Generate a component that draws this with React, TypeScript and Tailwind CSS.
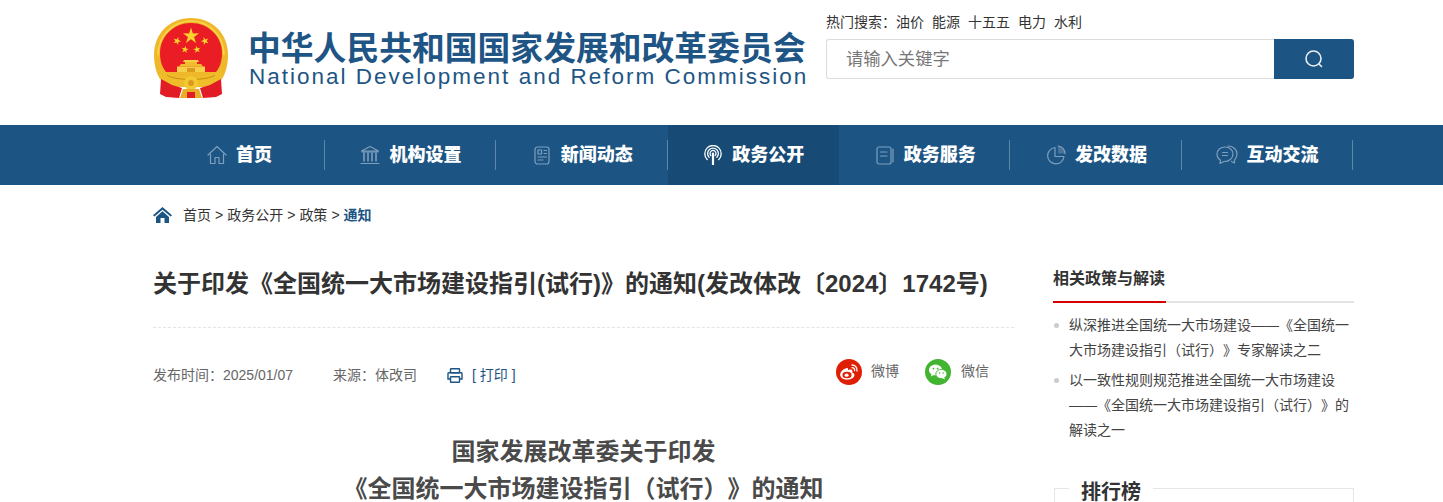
import React from "react";

const font = { fontFamily: '"Liberation Sans", "Noto Sans CJK SC", sans-serif' };

function Star({ x, y, r, rot = 0 }: { x: number; y: number; r: number; rot?: number }) {
  const pts: string[] = [];
  for (let i = 0; i < 10; i++) {
    const a = ((-90 + rot + i * 36) * Math.PI) / 180;
    const rr = i % 2 === 0 ? r : r * 0.38;
    pts.push(`${(x + rr * Math.cos(a)).toFixed(2)},${(y + rr * Math.sin(a)).toFixed(2)}`);
  }
  return <polygon points={pts.join(" ")} fill="#fbd32c" />;
}

function Emblem() {
  return (
    <svg width="76" height="82" viewBox="0 0 76 82" className="shrink-0">
      <path d="M7 62 C2 54 1 44 1 38 C1 16 17 1 38 1 C59 1 75 16 75 38 C75 44 74 54 69 62 L60 68 H16 Z" fill="#eeb82a" />
      <path d="M5 38 C5 19 20 4 38 4 C56 4 71 19 71 38" fill="none" stroke="#f8d54a" strokeWidth="1.5" />
      <path d="M38 6 C21 6 7 19 7 36 C7 44 9 50 13 55 H63 C67 50 69 44 69 36 C69 19 55 6 38 6 Z" fill="#ea1c24" />
      <Star x={38} y={19} r={8.5} />
      <Star x={24} y={24} r={4.2} rot={20} />
      <Star x={52} y={24} r={4.2} rot={-20} />
      <Star x={32} y={32.5} r={3.9} rot={10} />
      <Star x={44} y={32.5} r={3.9} rot={-10} />
      <path d="M31 43 H45 L46 45 H30 Z" fill="#f7cf45" />
      <path d="M32 45 H44 V47 H48 L50 49.5 H26 L28 47 H32 Z" fill="#f0bd2f" />
      <path d="M24 49.5 H52 V55 H24 Z" fill="#f7d04a" />
      <path d="M34 51 H42 V55 H34 Z" fill="#d99a1e" />
      <path d="M9 52 C15 59 26 60 38 60 C50 60 61 59 67 52 L70 60 L58 70 H18 L6 60 Z" fill="#f0bd2a" />
      <path d="M14 58 C22 64 54 64 62 58" fill="none" stroke="#c98a12" strokeWidth="1" />
      <path d="M8 62 L19 68 L29 71 L26 81 L13 80 L7 77 Z" fill="#e21c24" />
      <path d="M68 62 L57 68 L47 71 L50 81 L63 80 L69 77 Z" fill="#e21c24" />
      <circle cx="38" cy="66" r="7" fill="#f3c832" />
      <circle cx="38" cy="66" r="3" fill="#d99a1e" />
      <path d="M30 72 H46 L49 81 H27 Z" fill="#e9ad28" />
      <path d="M34 75 H42 V81 H34 Z" fill="#e21c24" />
    </svg>
  );
}

const stroke = {
  fill: "none",
  stroke: "#7f9fbd",
  strokeWidth: 1.2,
  strokeLinecap: "round" as const,
  strokeLinejoin: "round" as const,
};

const icons: Record<string, React.ReactNode> = {
  home: (
    <svg width="20" height="20" viewBox="0 0 20 20" {...stroke}>
      <path d="M1 10 L10 1.5 L19 10" />
      <path d="M3.5 9 V18.5 H8 V12.5 H12 V18.5 H16.5 V9" />
    </svg>
  ),
  bank: (
    <svg width="20" height="20" viewBox="0 0 20 20" {...stroke}>
      <path d="M1.5 6 L10 1.5 L18.5 6 Z" />
      <path d="M4 8 V16 M8 8 V16 M12 8 V16 M16 8 V16" strokeWidth="1.6" />
      <path d="M1 18.5 H19 M2 6.8 H18" />
    </svg>
  ),
  news: (
    <svg width="16" height="19" viewBox="0 0 16 19" {...stroke}>
      <rect x="1" y="1" width="14" height="17" rx="2.5" />
      <rect x="4" y="4" width="3.5" height="4" />
      <path d="M10 4.5 H12.5 M10 7.5 H12.5 M4 11 H12.5 M4 14 H9" />
    </svg>
  ),
  signal: (
    <svg width="18" height="20" viewBox="0 0 18 20" fill="none" stroke="#ffffff" strokeWidth="1.3" strokeLinecap="round">
      <path d="M3.2 14.5 A8.2 8.2 0 1 1 14.8 14.5" />
      <path d="M5.2 12.4 A5.4 5.4 0 1 1 12.8 12.4" />
      <path d="M6.9 10.6 A3 3 0 1 1 11.1 10.6" />
      <path d="M9 8.5 V19.5" strokeWidth="2.2" />
    </svg>
  ),
  book: (
    <svg width="18" height="19" viewBox="0 0 18 19" {...stroke}>
      <rect x="1" y="1" width="14" height="17" rx="2" />
      <path d="M4.5 6 H11 M4.5 10 H11 M17 3 V16" />
    </svg>
  ),
  pie: (
    <svg width="19" height="20" viewBox="0 0 19 20" {...stroke}>
      <path d="M8 2.5 A8.2 8.2 0 1 0 17 11.5 H8 Z" />
      <path d="M11 1 A7.5 7.5 0 0 1 18 8.5 H11 Z" fill="#6d8dac" stroke="none" opacity="0.55" />
      <path d="M11 1 A7.5 7.5 0 0 1 18 8.5" />
    </svg>
  ),
  chat: (
    <svg width="22" height="20" viewBox="0 0 22 20" {...stroke}>
      <path d="M9 2 C4.5 2 1 5 1 9 C1 11.8 2.5 14 4.5 15.2 L4 18.5 L8 16.5 C13 16.5 17 13.5 17 9 C17 5 13.5 2 9 2 Z" />
      <path d="M12 1 C17 1 21 4.5 21 9 C21 11.5 20 13.5 18.5 15 L18.5 18 L15.5 16.5" />
      <path d="M6.5 7.5 H11.5 M6.5 10.5 H11.5" />
    </svg>
  ),
};

const navItems = [
  { key: "home", label: "首页", sep: true },
  { key: "bank", label: "机构设置", sep: true },
  { key: "news", label: "新闻动态", sep: true },
  { key: "signal", label: "政务公开", active: true, sep: false },
  { key: "book", label: "政务服务", sep: true },
  { key: "pie", label: "发改数据", sep: true },
  { key: "chat", label: "互动交流", sep: true },
];

function Header() {
  return (
    <div className="h-[125px] flex pl-[153px]">
      <div className="w-[1201px] flex justify-between">
        <div className="flex items-start pt-[17px] gap-[19px]">
          <Emblem />
          <div className="text-[#1e5584] pt-[16px] w-[562px]">
            <div className="text-[32.8px] leading-[31px] font-bold whitespace-nowrap">中华人民共和国国家发展和改革委员会</div>
            <div className="text-[22.5px] leading-[25px] tracking-[2px] pl-[1px] whitespace-nowrap">National Development and Reform Commission</div>
          </div>
        </div>
        <div className="w-[528px] pt-[13px]">
          <div className="text-[14px] leading-[19px] text-[#333] flex gap-[8px] whitespace-nowrap">
            <span className="-mr-[8px] w-[70px]">热门搜索：</span>
            <span>油价</span>
            <span>能源</span>
            <span>十五五</span>
            <span>电力</span>
            <span>水利</span>
          </div>
          <div className="mt-[7px] h-[40px] flex">
            <div className="w-[448px] border border-[#dcdcdc] border-r-0 rounded-l-[3px] pl-[19px] pt-[2px] flex items-center text-[17.3px] text-[#777]">
              请输入关键字
            </div>
            <div className="w-[80px] bg-[#1c5483] rounded-r-[3px] flex items-center justify-center">
              <svg width="20" height="20" viewBox="0 0 20 20" fill="none" stroke="#e8eef4" strokeWidth="1.6" strokeLinecap="round">
                <circle cx="9.5" cy="9.5" r="7.5" />
                <path d="M15 15 L17.5 17.5" />
              </svg>
            </div>
          </div>
        </div>
      </div>
    </div>
  );
}

function Nav() {
  return (
    <div className="h-[60px] bg-[#1c5483] flex pl-[153.4px]">
      {navItems.map((n) => (
        <div
          key={n.key}
          className={`w-[171.4px] h-full flex items-center justify-center relative gap-[8px] ${n.active ? "bg-[#174a75]" : ""}`}
        >
          <span className="w-[22px] h-[20px] flex items-center justify-center">{icons[n.key]}</span>
          <span className="text-[18px] font-black text-white whitespace-nowrap">{n.label}</span>
          {n.sep ? <span className="absolute right-0 top-[15px] h-[30px] w-px bg-[#5d86a9]" /> : null}
        </div>
      ))}
    </div>
  );
}

function Crumb() {
  return (
    <div className="h-[60px] flex items-center text-[14px] text-[#333]">
      <svg width="19" height="16" viewBox="0 0 19 16" className="mr-[11px] -mt-[1px]">
        <path d="M9.5 0 L19 8.2 L17.6 9.6 L9.5 2.8 L1.4 9.6 L0 8.2 Z" fill="#1c5483" />
        <path d="M3 10 L9.5 4.3 L16 10 V16 H11.5 V11 H7.5 V16 H3 Z" fill="#1c5483" />
      </svg>
      <span>首页</span>
      <span className="mx-[4px]">&gt;</span>
      <span>政务公开</span>
      <span className="mx-[4px]">&gt;</span>
      <span>政策</span>
      <span className="mx-[4px]">&gt;</span>
      <span className="text-[#1c5483] font-bold">通知</span>
    </div>
  );
}

function Main() {
  return (
    <div className="w-[861px]">
      <h1 className="mt-[21px] text-[24px] leading-[36px] font-bold text-[#333] whitespace-nowrap">
        关于印发《全国统一大市场建设指引(试行)》的通知(发改体改〔2024〕1742号)
      </h1>
      <div className="mt-[25px] border-b border-dashed border-[#e4e4e4]" />
      <div className="mt-[25px] h-[40px] flex items-center text-[14px] text-[#666] whitespace-nowrap">
        <span className="mt-[4px] w-[180px]">发布时间：2025/01/07</span>
        <span className="mt-[4px] w-[114px]">来源：体改司</span>
        <span className="mt-[4px] flex items-center gap-[9px] text-[#1c5483]">
          <svg width="16" height="15" viewBox="0 0 16 15" fill="none" stroke="#1c5483" strokeWidth="1.4">
            <rect x="3.5" y="0.8" width="9" height="4" rx="0.5" />
            <path d="M3.5 11 H1 V5.5 C1 5 1.5 4.8 2 4.8 H14 C14.5 4.8 15 5 15 5.5 V11 H12.5" />
            <rect x="3.5" y="8.8" width="9" height="5.4" rx="0.5" />
          </svg>
          [ 打印 ]
        </span>
        <div className="ml-auto flex items-center mr-[25px] -mt-[3px]">
          <span className="w-[26px] h-[26px] rounded-full bg-[#de1f05] flex items-center justify-center mr-[9px]">
            <svg width="20" height="18" viewBox="0 0 20 18">
              <path d="M8 5 C4 6 1 9 1.2 12 C1.5 15.5 5.5 17 9 16.6 C13 16.2 15.8 14 15.4 11.4 C15.2 10.2 14 9.6 13.2 9.4 C13.8 8 13.4 6.8 12 6.6 C11 6.4 9.6 7 9 7.2 C9.4 5.6 9 4.6 8 5 Z" fill="#fff" />
              <ellipse cx="8" cy="12" rx="4.6" ry="3.2" fill="#de1f05" />
              <ellipse cx="7.6" cy="12.2" rx="2" ry="1.6" fill="#fff" />
              <path d="M13 2 C16 2 18.5 4.5 18 8 M13 4.6 C14.8 4.6 16 6 15.6 7.6" fill="none" stroke="#fff" strokeWidth="1.3" strokeLinecap="round" />
            </svg>
          </span>
          <span className="w-[54px]">微博</span>
          <span className="w-[26px] h-[26px] rounded-full bg-[#41b52f] flex items-center justify-center mr-[10px]">
            <svg width="20" height="16" viewBox="0 0 20 16">
              <ellipse cx="7.5" cy="6" rx="6.6" ry="5.4" fill="#fff" />
              <path d="M3.6 9.5 L3 12.5 L6.5 10.5 Z" fill="#fff" />
              <ellipse cx="13.4" cy="10" rx="5.6" ry="4.6" fill="#fff" stroke="#41b52f" strokeWidth="0.9" />
              <path d="M16 13 L17 15.4 L13.8 14 Z" fill="#fff" />
              <circle cx="5.4" cy="4.6" r="0.9" fill="#41b52f" />
              <circle cx="9.6" cy="4.6" r="0.9" fill="#41b52f" />
              <circle cx="11.6" cy="9" r="0.75" fill="#41b52f" />
              <circle cx="15.2" cy="9" r="0.75" fill="#41b52f" />
            </svg>
          </span>
          <span>微信</span>
        </div>
      </div>
      <div className="mt-[40px] text-center text-[24px] leading-[37px] font-bold text-[#4a4a4a]">
        <div>国家发展改革委关于印发</div>
        <div>《全国统一大市场建设指引（试行）》的通知</div>
      </div>
    </div>
  );
}

function Side() {
  return (
    <div className="w-[300px] ml-[40px] mt-[21px]">
      <div className="h-[37px] border-b-2 border-[#e4e4e4] flex">
        <div className="h-[37px] border-b-2 border-[#d40000] text-[16px] leading-[26px] font-bold text-[#333] w-[113px] whitespace-nowrap -ml-px">
          相关政策与解读
        </div>
      </div>
      <ul className="mt-[10px] text-[14px] leading-[25px] text-[#444]">
        <li className="pl-[15px] relative mb-[5px]">
          <span className="absolute left-0 top-[10px] w-[5px] h-[5px] rounded-full bg-[#cccccc]" />
          纵深推进全国统一大市场建设——《全国统一大市场建设指引（试行）》专家解读之二
        </li>
        <li className="pl-[15px] relative">
          <span className="absolute left-0 top-[10px] w-[5px] h-[5px] rounded-full bg-[#cccccc]" />
          以一致性规则规范推进全国统一大市场建设——《全国统一大市场建设指引（试行）》的解读之一
        </li>
      </ul>
      <div className="mt-[45px] h-[60px] border border-[#e6e6e6] relative">
        <span className="absolute left-[14px] -top-[11px] bg-white px-[12px] text-[20px] leading-[28px] font-bold text-[#333] whitespace-nowrap">
          排行榜
        </span>
      </div>
    </div>
  );
}

export default function App() {
  return (
    <div style={font} className="w-[1443px] h-[502px] overflow-hidden bg-white [text-spacing-trim:space-all]">
      <Header />
      <Nav />
      <div className="pl-[153px]">
        <Crumb />
        <div className="flex items-start">
          <Main />
          <Side />
        </div>
      </div>
    </div>
  );
}
